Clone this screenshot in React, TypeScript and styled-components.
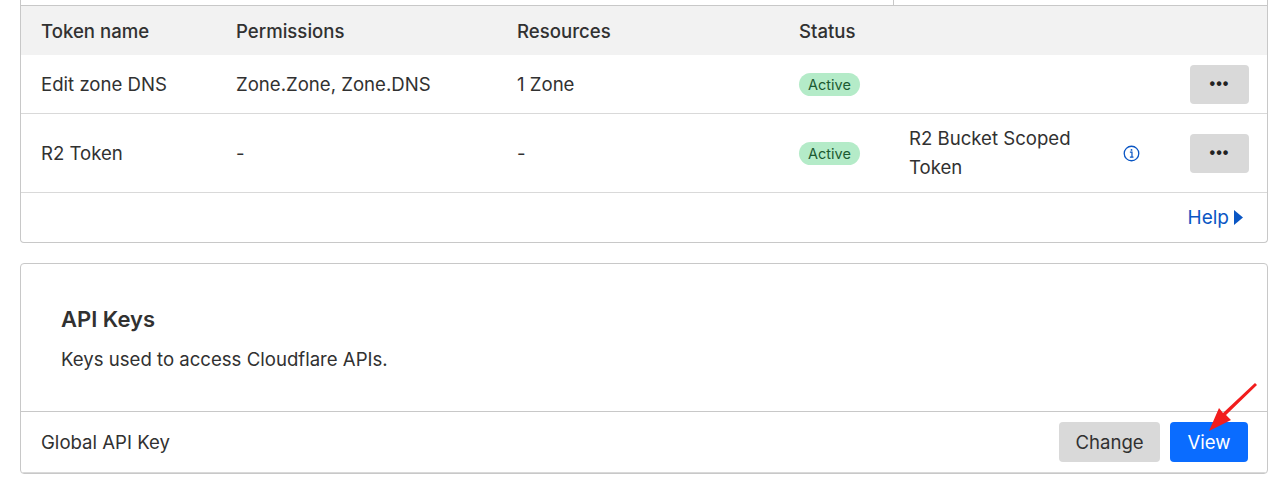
import React from "react";
import styled, { createGlobalStyle } from "styled-components";

const Global = createGlobalStyle`
  html, body { margin: 0; padding: 0; background: #fff; }
  body { font-family: Inter, "Noto Sans", sans-serif; color: #313131; }
`;

const Page = styled.div`
  position: relative;
  width: 1280px;
  height: 479px;
  overflow: hidden;
  padding: 0 12px 0 20px;
  box-sizing: border-box;
`;

const Card = styled.div<{ $top?: boolean }>`
  border: 1px solid #c8c8c8;
  border-radius: 4px;
  ${(p) => (p.$top ? "border-top: none; border-top-left-radius: 0; border-top-right-radius: 0;" : "")}
  background: #fff;
  overflow: hidden;
`;

const Strip = styled.div`
  height: 5px;
  display: grid;
  grid-template-columns: 872px 1fr;
  border-bottom: 1px solid #c8c8c8;
`;
const StripCell = styled.div`
  border-left: 1px solid #c8c8c8;
`;

const cols = "195px 281px 282px 110px 222px 59px 1fr";

const Row = styled.div<{ $head?: boolean; $h: number }>`
  display: grid;
  grid-template-columns: ${cols};
  align-items: center;
  height: ${(p) => p.$h}px;
  padding-left: 20px;
  padding-right: 19px;
  font-size: 18.6px;
  background: ${(p) => (p.$head ? "#f2f2f2" : "#fff")};
  font-weight: ${(p) => (p.$head ? 500 : 400)};
  border-bottom: ${(p) => (p.$head ? "none" : "1px solid #d9d9d9")};
  box-sizing: border-box;
`;

const Badge = styled.span`
  display: inline-block;
  background: #b4ebc8;
  color: #1c5a32;
  font-size: 14.5px;
  padding: 3px 9px;
  border-radius: 12px;
  justify-self: start;
`;

const Wrap = styled.span`
  line-height: 29px;
  width: 190px;
`;

const InfoCell = styled.span`
  margin-left: -8px;
  display: flex;
`;

const MoreBtn = styled.button`
  justify-self: end;
  width: 59px;
  height: 39px;
  border: none;
  border-radius: 4px;
  background: #d9d9d9;
  font-size: 16px;
  font-weight: 700;
  letter-spacing: 1px;
  color: #222;
`;

const Footer = styled.div`
  height: 49px;
  display: flex;
  align-items: center;
  justify-content: flex-end;
  padding-right: 24px;
`;

const HelpLink = styled.a`
  color: #0a56c4;
  font-size: 19px;
  display: flex;
  align-items: center;
  gap: 5px;
`;

const Spacer = styled.div`
  height: 20px;
`;

const KeysHead = styled.div`
  padding: 42px 40px 0;
  height: 148px;
  box-sizing: border-box;
  border-bottom: 1px solid #c8c8c8;
`;
const Title = styled.h2`
  margin: 0 0 16px;
  font-size: 22px;
  font-weight: 600;
  color: #313131;
`;
const Desc = styled.p`
  margin: 0;
  font-size: 18.6px;
`;

const KeyRow = styled.div`
  height: 60px;
  display: flex;
  align-items: center;
  justify-content: space-between;
  padding: 0 19px 0 20px;
  font-size: 18.6px;
  border-bottom: 1px solid #d9d9d9;
`;
const Btns = styled.div`
  display: flex;
  gap: 10px;
`;
const Btn = styled.button<{ $primary?: boolean }>`
  height: 40px;
  width: ${(p) => (p.$primary ? 78 : 101)}px;
  border: none;
  border-radius: 4px;
  font-family: inherit;
  font-size: 18.6px;
  background: ${(p) => (p.$primary ? "#0a6cff" : "#d9d9d9")};
  color: ${(p) => (p.$primary ? "#fff" : "#313131")};
`;

const Arrow = styled.svg`
  position: absolute;
  left: 1200px;
  top: 380px;
`;

export default function App() {
  return (
    <>
      <Global />
      <Page>
        <Card $top>
          <Strip>
            <div />
            <StripCell />
          </Strip>
          <Row $head $h={49}>
            <span>Token name</span>
            <span>Permissions</span>
            <span>Resources</span>
            <span>Status</span>
            <span />
            <span />
            <span />
          </Row>
          <Row $h={59}>
            <span>Edit zone DNS</span>
            <span>Zone.Zone, Zone.DNS</span>
            <span>1 Zone</span>
            <Badge>Active</Badge>
            <span />
            <span />
            <MoreBtn>•••</MoreBtn>
          </Row>
          <Row $h={79}>
            <span>R2 Token</span>
            <span>-</span>
            <span>-</span>
            <Badge>Active</Badge>
            <Wrap>R2 Bucket Scoped Token</Wrap>
            <InfoCell>
              <svg width="17" height="17" viewBox="0 0 18 18">
                <circle cx="9" cy="9" r="7.7" fill="none" stroke="#0a56c4" strokeWidth="1.4" />
                <circle cx="9" cy="5.2" r="1" fill="#0a56c4" />
                <path d="M7.3 7.6h2.2v5.2M7.3 12.8h3.8" fill="none" stroke="#0a56c4" strokeWidth="1.3" />
              </svg>
            </InfoCell>
            <MoreBtn>•••</MoreBtn>
          </Row>
          <Footer>
            <HelpLink>
              Help
              <svg width="9" height="15" viewBox="0 0 9 15">
                <path d="M0 0 L9 7.5 L0 15 Z" fill="#0a56c4" />
              </svg>
            </HelpLink>
          </Footer>
        </Card>
        <Spacer />
        <Card>
          <KeysHead>
            <Title>API Keys</Title>
            <Desc>Keys used to access Cloudflare APIs.</Desc>
          </KeysHead>
          <KeyRow>
            <span>Global API Key</span>
            <Btns>
              <Btn>Change</Btn>
              <Btn $primary>View</Btn>
            </Btns>
          </KeyRow>
        </Card>
        <Arrow width="60" height="60" viewBox="0 0 60 60">
          <path d="M57 5 L26 35 L31 40 L9 51 L19 28 L23 33 L55 3 Z" fill="#f21d1d" />
        </Arrow>
      </Page>
    </>
  );
}
